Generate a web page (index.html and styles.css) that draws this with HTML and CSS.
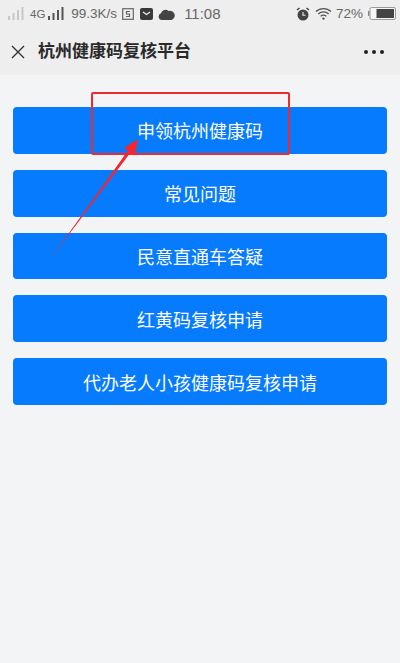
FILE: index.html
```html
<!DOCTYPE html>
<html lang="zh">
<head>
<meta charset="utf-8">
<title>杭州健康码复核平台</title>
<link rel="stylesheet" href="styles.css">
</head>
<body>
<header class="top">
  <div class="status">
    <div class="status-group">
      <svg class="sig" viewBox="0 0 16 14" width="16" height="14"><g fill="#c8c8c8"><rect x="0" y="9" width="2" height="4"/><rect x="4.500" y="6" width="2" height="7"/><rect x="9" y="3" width="2" height="10"/><rect x="13.500" y="0" width="2" height="13"/></g></svg>
      <span class="net">4G</span>
      <svg class="sig sig2" viewBox="0 0 16 14" width="16" height="14"><g fill="#555"><rect x="0" y="9" width="2" height="4"/><rect x="4.500" y="6" width="2" height="7"/><rect x="9" y="3" width="2" height="10"/><rect x="13.500" y="0" width="2" height="13"/></g></svg>
      <span class="speed">99.3K/s</span>
      <svg class="ic-s" viewBox="0 0 12 12" width="12" height="12"><rect x="0.700" y="0.700" width="10.600" height="10.600" fill="none" stroke="#666" stroke-width="1.200"/><path d="M8 3.500H4.500V6H7.500V8.500H4" fill="none" stroke="#666" stroke-width="1.200"/></svg>
      <svg class="ic-m" viewBox="0 0 13 12" width="13" height="12"><rect width="13" height="12" rx="2" fill="#3a3a3a"/><path d="M3 4l3.500 2.500L10 4" fill="none" stroke="#eee" stroke-width="1.300"/></svg>
      <svg class="ic-c" viewBox="0 0 17 12" width="17" height="12"><path d="M4 12a3.500 3.500 0 0 1-1-6.800A4.500 4.500 0 0 1 10.500 3 3.800 3.800 0 0 1 13.500 12Z" fill="#444"/></svg>
      <span class="time">11:08</span>
    </div>
    <div class="status-group right">
      <svg class="ic-a" viewBox="0 0 14 14" width="14" height="14"><circle cx="7" cy="8" r="5.500" fill="#444"/><path d="M1 3l2.500-2M13 3l-2.500-2" stroke="#444" stroke-width="1.600"/><path d="M7 5v3.300h2.500" fill="none" stroke="#eee" stroke-width="1.100"/></svg>
      <svg class="ic-w" viewBox="0 0 17 13" width="17" height="13"><g fill="none" stroke="#555" stroke-width="1.300"><path d="M1 4.500a11 11 0 0 1 15 0"/><path d="M3.300 7a7.500 7.500 0 0 1 10.400 0"/><path d="M5.600 9.400a4 4 0 0 1 5.800 0"/></g><circle cx="8.500" cy="11.600" r="1.200" fill="#555"/></svg>
      <span class="pct">72%</span>
      <svg class="bat" viewBox="0 0 28 13" width="28" height="13"><rect x="0" y="4" width="1.500" height="5" fill="#888"/><rect x="2" y="0.500" width="25.500" height="12" rx="1.500" fill="#f6f6f6" stroke="#999"/><rect x="8.500" y="2" width="17.500" height="9" fill="#444"/></svg>
    </div>
  </div>
  <div class="nav">
    <svg class="close" viewBox="0 0 16 16" width="16" height="16"><path d="M2 2l12 12M14 2L2 14" stroke="#333" stroke-width="1.400" fill="none"/></svg>
    <h1 class="title">杭州健康码复核平台</h1>
    <div class="more"><i></i><i></i><i></i></div>
  </div>
</header>
<main class="list">
  <a class="btn">申领杭州健康码</a>
  <a class="btn">常见问题</a>
  <a class="btn">民意直通车答疑</a>
  <a class="btn">红黄码复核申请</a>
  <a class="btn">代办老人小孩健康码复核申请</a>
</main>
<div class="mark"></div>
<svg class="arrow" viewBox="0 0 400 663" width="400" height="663"><path d="M49 261L128 150.500L124 148L138 139L135 155.500L130.500 152.500Z" fill="#f5262d"/></svg>
</body>
</html>
```
FILE: styles.css
```css
* { box-sizing: border-box; }
html, body { margin: 0; padding: 0; }
body {
  width: 400px;
  height: 663px;
  overflow: hidden;
  position: relative;
  background: #f3f4f6;
  font-family: "Liberation Sans", "Noto Sans CJK SC", sans-serif;
}
.top { background: #eeeeee; height: 75px; }
.status {
  height: 27px;
  padding: 0 4px 0 8px;
  display: flex;
  justify-content: space-between;
  align-items: center;
  color: #666;
}
.status-group { display: flex; align-items: center; }
.net { font-size: 11.500px; margin-left: 6px; }
.sig2 { margin-left: 3px; }
.speed { font-size: 13.500px; margin-left: 7px; }
.ic-s { margin-left: 5px; }
.ic-m { margin-left: 6px; }
.ic-c { margin-left: 5px; }
.time { font-size: 15px; margin-left: 9px; }
.ic-w { margin-left: 5px; }
.pct { font-size: 13.500px; margin-left: 4px; }
.bat { margin-left: 5px; }
.nav {
  height: 48px;
  padding: 2px 16px 0 10px;
  display: flex;
  align-items: center;
}
.title {
  margin: 0 0 0 12px;
  flex: 1;
  font-size: 17px;
  font-weight: 700;
  line-height: 22px;
  color: #2a2a2a;
}
.more { display: flex; gap: 4px; }
.more i { width: 4px; height: 4px; border-radius: 50%; background: #222; }
.list {
  padding: 32px 13px 0;
  display: flex;
  flex-direction: column;
  gap: 16px;
}
.btn {
  height: 46.800px;
  border-radius: 4px;
  background: #067bfe;
  color: #fff;
  font-size: 18px;
  display: flex;
  align-items: center;
  justify-content: center;
}
.mark {
  position: absolute;
  left: 91px;
  top: 92px;
  width: 199px;
  height: 63px;
  border: 2px solid #ee2a2e;
  border-radius: 2px;
}
.arrow { position: absolute; left: 0; top: 0; pointer-events: none; }
```
